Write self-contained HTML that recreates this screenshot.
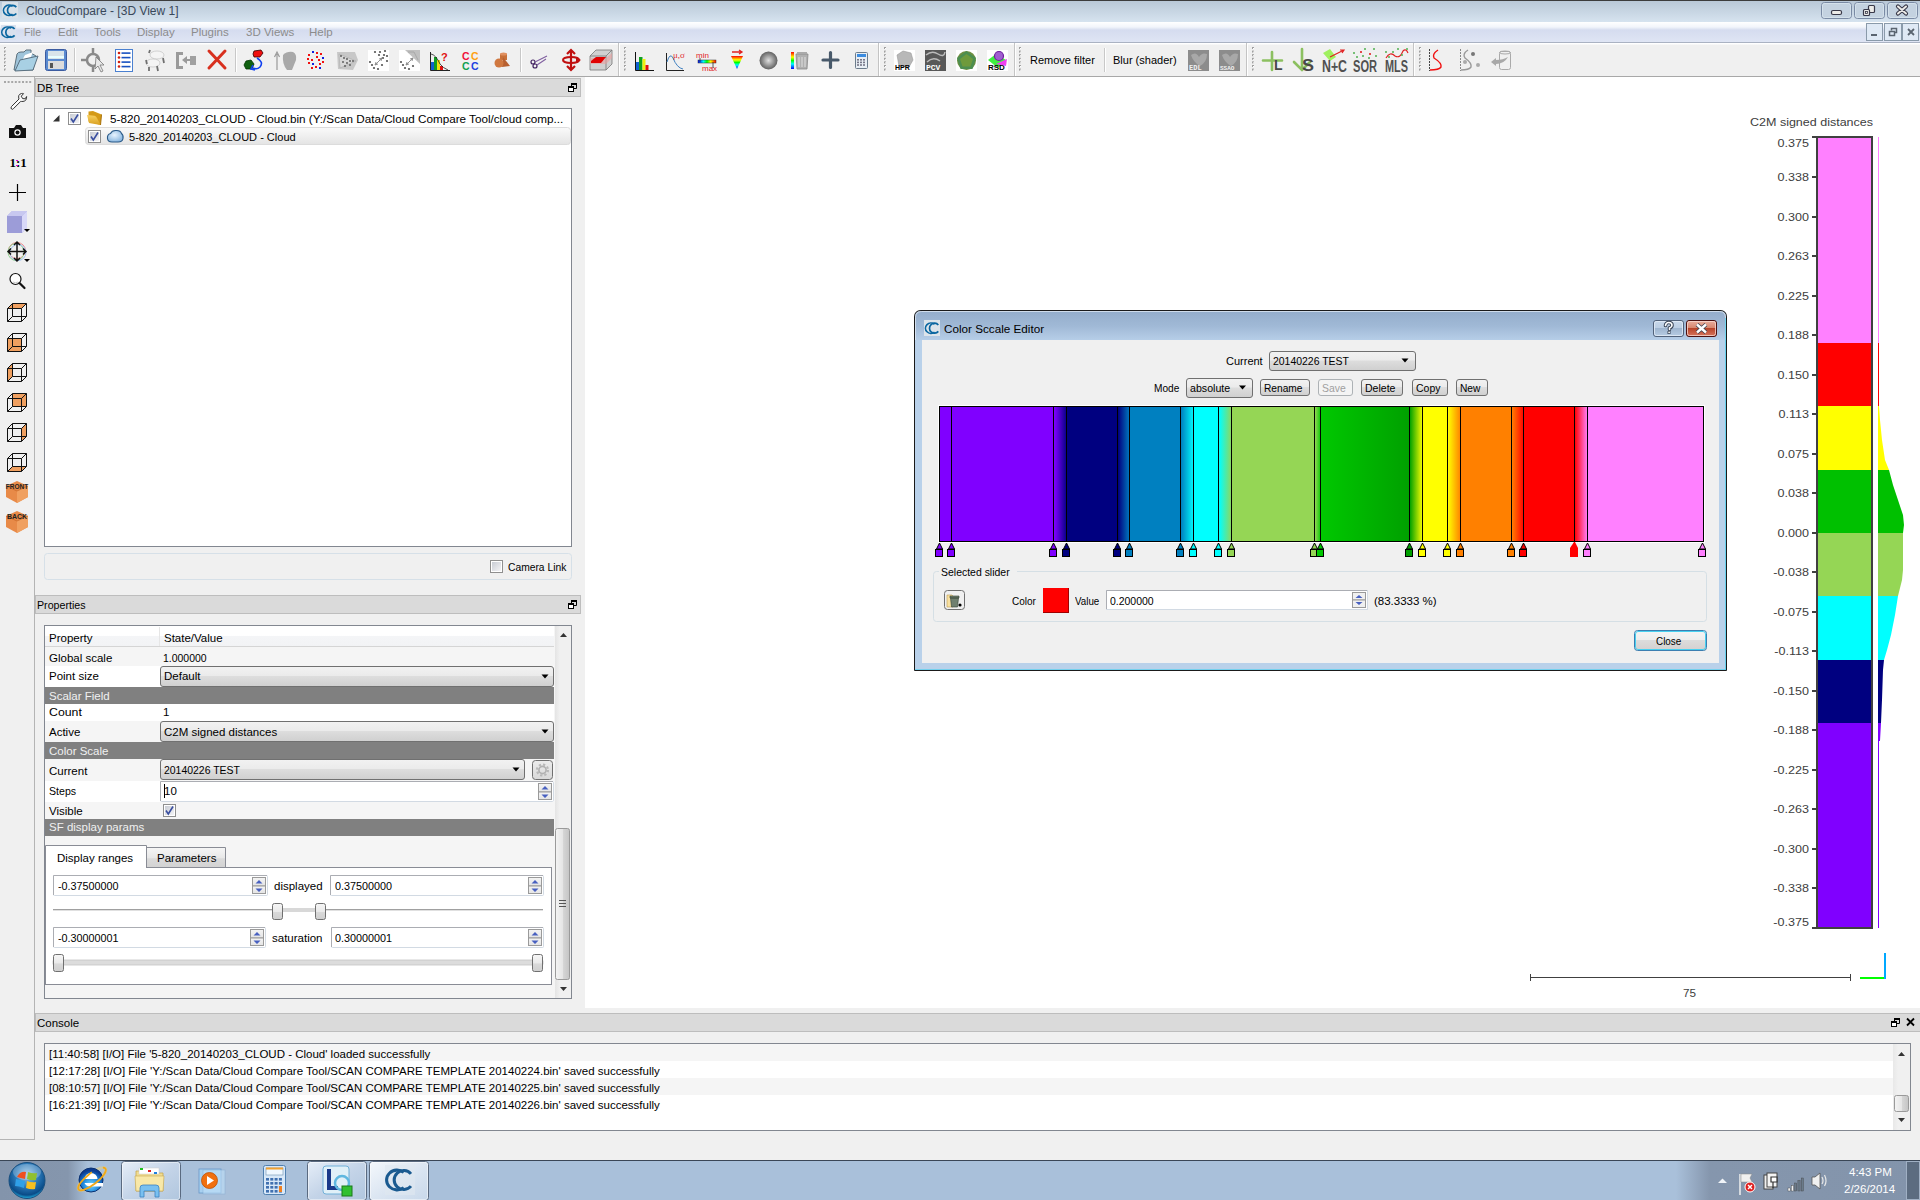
<!DOCTYPE html>
<html><head><meta charset="utf-8">
<style>
*{box-sizing:border-box;margin:0;padding:0}
html,body{width:1920px;height:1200px;overflow:hidden;background:#f0f0f0;font-family:"Liberation Sans",sans-serif;font-size:11.5px;color:#000;position:relative}
.a{position:absolute}
.t{position:absolute;white-space:nowrap;line-height:14px}
</style></head><body>

<!-- TITLE BAR -->
<div class="a" style="left:0;top:0;width:1920px;height:1px;background:#3c3c3c"></div>
<div class="a" style="left:0;top:1px;width:1920px;height:21px;background:linear-gradient(#b9c8d7,#d6e3ef)"></div>
<!-- MENU BAR -->
<div class="a" style="left:0;top:22px;width:1920px;height:20px;background:linear-gradient(#ffffff 0,#f2f5fb 25%,#d5dcef 40%,#dfe5f4 100%)"></div>
<div class="a" style="left:0;top:42px;width:1920px;height:1px;background:#aab2c2"></div>


<!-- TITLE/MENU CONTENT -->
<svg class="a" style="left:0;top:0" width="1920" height="77">
<defs>
<linearGradient id="wbtn" x1="0" y1="0" x2="0" y2="1"><stop offset="0" stop-color="#e3ebf3"/><stop offset="0.45" stop-color="#cfdbe8"/><stop offset="0.5" stop-color="#b7c8da"/><stop offset="1" stop-color="#d2e0ee"/></linearGradient>
<linearGradient id="mbtn" x1="0" y1="0" x2="0" y2="1"><stop offset="0" stop-color="#eef3fb"/><stop offset="1" stop-color="#d3ddef"/></linearGradient>
</defs>
<!-- title icon -->
<rect x="2" y="2" width="16" height="16" fill="#d9e1e8"/>
<g class="cc" fill="none" stroke="#0a66a0" stroke-width="1.70"><path d="M12.54 6.32 A5.50 5.20 0 1 0 12.54 14.28"/><path d="M16.33 7.09 A5.00 5.00 0 1 0 16.33 13.51"/></g>
<!-- menu icon -->
<rect x="1" y="25" width="15" height="15" fill="#d9e1ee"/>
<g class="cc" fill="none" stroke="#0a66a0" stroke-width="1.70"><path d="M10.84 28.22 A5.50 5.20 0 1 0 10.84 36.18"/><path d="M14.63 28.99 A5.00 5.00 0 1 0 14.63 35.41"/></g>
<!-- window buttons -->
<rect x="1821.5" y="2.5" width="30" height="16" rx="3" fill="#c4d2e0" stroke="#7a8aa4"/><rect x="1822.5" y="3.5" width="28" height="14" rx="2" fill="none" stroke="#d8e4ee" stroke-width="0.8"/>
<rect x="1854.5" y="2.5" width="30" height="16" rx="3" fill="#c4d2e0" stroke="#7a8aa4"/><rect x="1855.5" y="3.5" width="28" height="14" rx="2" fill="none" stroke="#d8e4ee" stroke-width="0.8"/>
<rect x="1887.5" y="2.5" width="30" height="16" rx="3" fill="#c4d2e0" stroke="#7a8aa4"/><rect x="1888.5" y="3.5" width="28" height="14" rx="2" fill="none" stroke="#d8e4ee" stroke-width="0.8"/>
<rect x="1831.5" y="10.5" width="10" height="4" rx="1.5" fill="#ecebe8" stroke="#383848" stroke-width="1.2"/>
<rect x="1868.5" y="5.5" width="6" height="7" rx="1" fill="#ecebe8" stroke="#383848" stroke-width="1.2"/><rect x="1863.5" y="9.5" width="6" height="6" rx="1" fill="#ecebe8" stroke="#383848" stroke-width="1.2"/><rect x="1865.5" y="11.5" width="2" height="2" fill="none" stroke="#383848" stroke-width="0.8"/>
<path d="M1898 6.5 L1906 13.5 M1906 6.5 L1898 13.5" stroke="#383848" stroke-width="4.2" stroke-linecap="round"/>
<path d="M1898 6.5 L1906 13.5 M1906 6.5 L1898 13.5" stroke="#ecebe8" stroke-width="2" stroke-linecap="round"/>
<!-- MDI buttons -->
<rect x="1866.5" y="23.5" width="16" height="17" fill="#dfe9f5" stroke="#8a9aaa"/>
<rect x="1884.5" y="23.5" width="17" height="17" fill="#dfe9f5" stroke="#8a9aaa"/>
<rect x="1902.5" y="23.5" width="16" height="17" fill="#dfe9f5" stroke="#8a9aaa"/>
<rect x="1871" y="34" width="6" height="2" fill="#5a6470"/>
<rect x="1889.5" y="31.5" width="5" height="4" fill="none" stroke="#5a6470" stroke-width="1.5"/>
<path d="M1891.5 30.5 v-2 h5 v4 h-2" fill="none" stroke="#5a6470" stroke-width="1.5"/>
<path d="M1908 29 l6 6 M1914 29 l-6 6" stroke="#5a6470" stroke-width="1.8"/>
</svg>
<div class="t" style="left:26px;top:4px;font-size:12px;color:#39485a">CloudCompare - [3D View 1]</div>
<div class="t" style="left:24px;top:25px;font-size:11.5px;color:#8c8c8c;word-spacing:0;transform:scaleX(0.92);transform-origin:0 0">File</div>
<div class="t" style="left:58px;top:25px;font-size:11.5px;color:#8c8c8c">Edit</div>
<div class="t" style="left:94px;top:25px;font-size:11.5px;color:#8c8c8c">Tools</div>
<div class="t" style="left:137px;top:25px;font-size:11.5px;color:#8c8c8c">Display</div>
<div class="t" style="left:191px;top:25px;font-size:11.5px;color:#8c8c8c">Plugins</div>
<div class="t" style="left:246px;top:25px;font-size:11.5px;color:#8c8c8c">3D Views</div>
<div class="t" style="left:309px;top:25px;font-size:11.5px;color:#8c8c8c">Help</div>

<!-- TOOLBAR -->
<div class="a" style="left:0;top:43px;width:1920px;height:33px;background:linear-gradient(#ffffff 0,#ffffff 1px,#f0f0f0 2px)"></div>
<div class="a" style="left:0;top:76px;width:1920px;height:1px;background:#a8a8a8"></div>

<!-- TOOLBAR ICONS -->
<svg class="a" style="left:0;top:0" width="1920" height="77"><rect x="4" y="47.0" width="2" height="2" fill="#a0a0a0"/><rect x="5" y="48.0" width="1" height="1" fill="#fff"/><rect x="4" y="50.6" width="2" height="2" fill="#a0a0a0"/><rect x="5" y="51.6" width="1" height="1" fill="#fff"/><rect x="4" y="54.2" width="2" height="2" fill="#a0a0a0"/><rect x="5" y="55.2" width="1" height="1" fill="#fff"/><rect x="4" y="57.8" width="2" height="2" fill="#a0a0a0"/><rect x="5" y="58.8" width="1" height="1" fill="#fff"/><rect x="4" y="61.4" width="2" height="2" fill="#a0a0a0"/><rect x="5" y="62.4" width="1" height="1" fill="#fff"/><rect x="4" y="65.0" width="2" height="2" fill="#a0a0a0"/><rect x="5" y="66.0" width="1" height="1" fill="#fff"/><rect x="4" y="68.6" width="2" height="2" fill="#a0a0a0"/><rect x="5" y="69.6" width="1" height="1" fill="#fff"/><path d="M14 70 L17 54 Q18 52 21 52 L24 52 L26 50 L31 50 L31 53 L36 56 L33 70 Z" fill="#9fc4da" stroke="#5c6f7a" stroke-width="1"/><path d="M18 68 L25 55 L33 52 L27 66 Z" fill="#fff"/><path d="M15 71 L20 60 L38 56 L33 70 Z" fill="#a8d0e4" stroke="#5a7080" stroke-width="1"/><rect x="45.5" y="49.5" width="21" height="21" rx="2" fill="#5a8ad0" stroke="#3c5ca0"/><rect x="48" y="51" width="16" height="8" fill="#d8e4ea"/><rect x="48" y="56" width="16" height="2" fill="#e8ffff"/><rect x="48" y="61" width="16" height="8" fill="#dcdcdc"/><rect x="50" y="63" width="3" height="5" fill="#555"/><rect x="74" y="48" width="1" height="24" fill="#c8c8c8"/><rect x="75" y="48" width="1" height="24" fill="#fff"/><circle cx="93" cy="60" r="6" fill="none" stroke="#8a8a8a" stroke-width="2.5"/><path d="M93 48 v7 M93 65 v7 M81 60 h7" stroke="#8a8a8a" stroke-width="2.5"/><path d="M96 57 L104 65 L100 65 L103 71 L101 72 L98 66 L95 69 Z" fill="#e8e8e8" stroke="#777" stroke-width="0.8"/><rect x="115.5" y="49.5" width="17" height="22" fill="#fff" stroke="#4a80d0"/><circle cx="119" cy="53.0" r="1.3" fill="#d02010"/><rect x="121.5" y="52.3" width="9" height="1.6" fill="#1850c0"/><circle cx="119" cy="57.5" r="1.3" fill="#d02010"/><rect x="121.5" y="56.8" width="9" height="1.6" fill="#1850c0"/><circle cx="119" cy="62.0" r="1.3" fill="#d02010"/><rect x="121.5" y="61.3" width="9" height="1.6" fill="#1850c0"/><circle cx="119" cy="66.5" r="1.3" fill="#d02010"/><rect x="121.5" y="65.8" width="9" height="1.6" fill="#1850c0"/><ellipse cx="157" cy="55" rx="7" ry="4" fill="#f4f4f4" stroke="#bbb" stroke-width="0.6"/><ellipse cx="153" cy="63" rx="7" ry="4" fill="#f4f4f4" stroke="#bbb" stroke-width="0.6"/><path d="M150 50 l-1 3 M163 58 l1 5 M146 60 l1 4 M149 67 l0 4 M157 66 l1 5" stroke="#707070" stroke-width="1.8"/><path d="M176 52 h7 v3 h-4 v11 h4 v3 h-7 Z" fill="#9a9a9a"/><path d="M182 60 l5 -4 v3 h4 v2 h-4 v3 Z" fill="#9a9a9a"/><rect x="190" y="56" width="6" height="9" fill="#a0a0a0"/><path d="M209 51 L225 68 M225 51 L209 68" stroke="#d8301e" stroke-width="3" stroke-linecap="round"/><rect x="235" y="48" width="1" height="24" fill="#c8c8c8"/><rect x="236" y="48" width="1" height="24" fill="#fff"/><path d="M254 51 L261 50 L263 53 L260 57 L254 57 L253 54 Z" fill="#f01010" stroke="#300" stroke-width="0.8"/><path d="M246 61 L251 60 L254 64 L252 69 L246 69 L244 65 Z" fill="#106010" stroke="#030" stroke-width="0.8"/><path d="M257 58 Q264 62 260 67 Q257 70 253 68" fill="none" stroke="#1040f0" stroke-width="1.6"/><path d="M253 65 l-2 4 l4 1" fill="none" stroke="#1040f0" stroke-width="1.6"/><path d="M277 70 V54 M274.5 57 L277 52 L279.5 57" stroke="#999" stroke-width="1.2" fill="none"/><path d="M283 55 Q287 51 293 52 Q297 54 296 60 L292 70 L287 70 Q282 64 283 55 Z" fill="#a8a8a8"/><rect x="312" y="51" width="2" height="2" fill="#1020e0"/><rect x="316" y="52" width="2" height="2" fill="#f01010"/><rect x="320" y="53" width="2" height="2" fill="#f01010"/><rect x="308" y="54" width="2" height="2" fill="#f01010"/><rect x="316" y="56" width="2" height="2" fill="#f01010"/><rect x="322" y="57" width="2" height="2" fill="#1020e0"/><rect x="307" y="58" width="2" height="2" fill="#f01010"/><rect x="311" y="59" width="2" height="2" fill="#f01010"/><rect x="318" y="59" width="2" height="2" fill="#f01010"/><rect x="322" y="61" width="2" height="2" fill="#f01010"/><rect x="308" y="62" width="2" height="2" fill="#f01010"/><rect x="312" y="63" width="2" height="2" fill="#1020e0"/><rect x="319" y="63" width="2" height="2" fill="#f01010"/><rect x="311" y="67" width="2" height="2" fill="#f01010"/><rect x="315" y="66" width="2" height="2" fill="#f01010"/><rect x="319" y="67" width="2" height="2" fill="#1020e0"/><path d="M337 52 L355 52 L358 60 L353 70 L338 69 Z" fill="#c8c8c8"/><path d="M339 54 L356 61 L340 68 Z" fill="#d8d8d8" stroke="#aaa" stroke-width="0.6"/><circle cx="341" cy="56" r="0.9" fill="#555"/><circle cx="344" cy="58" r="0.9" fill="#555"/><circle cx="347" cy="59" r="0.9" fill="#555"/><circle cx="343" cy="62" r="0.9" fill="#555"/><circle cx="347" cy="63" r="0.9" fill="#555"/><circle cx="350" cy="61" r="0.9" fill="#555"/><circle cx="345" cy="66" r="0.9" fill="#555"/><circle cx="350" cy="65" r="0.9" fill="#555"/><circle cx="353" cy="61" r="0.9" fill="#555"/><rect x="368" y="50" width="21" height="21" fill="#fff"/><circle cx="375" cy="52" r="1.1" fill="#555"/><circle cx="380" cy="52" r="1.1" fill="#555"/><circle cx="385" cy="51" r="1.1" fill="#555"/><circle cx="379" cy="55" r="1.1" fill="#555"/><circle cx="384" cy="55" r="1.1" fill="#555"/><circle cx="387" cy="56" r="1.1" fill="#555"/><circle cx="383" cy="58" r="1.1" fill="#555"/><circle cx="387" cy="61" r="1.1" fill="#555"/><circle cx="370" cy="62" r="1.1" fill="#555"/><circle cx="372" cy="65" r="1.1" fill="#555"/><circle cx="374" cy="68" r="1.1" fill="#555"/><circle cx="378" cy="69" r="1.1" fill="#555"/><circle cx="382" cy="65" r="1.1" fill="#555"/><path d="M375 65 L382 58 M375 65 l1 -3 M375 65 l3 -1 M382 58 l-3 1 M382 58 l-1 3" stroke="#888" stroke-width="0.9"/><rect x="399" y="50" width="21" height="21" fill="#fff"/><path d="M405 50 L420 50 L420 64 Z" fill="#c0c0c0"/><path d="M408 52 L414 52 L418 60" stroke="#999" fill="none" stroke-width="0.6"/><circle cx="401" cy="62" r="1.1" fill="#555"/><circle cx="403" cy="65" r="1.1" fill="#555"/><circle cx="405" cy="68" r="1.1" fill="#555"/><circle cx="409" cy="69" r="1.1" fill="#555"/><circle cx="413" cy="66" r="1.1" fill="#555"/><path d="M406 65 L413 58 M406 65 l1 -3 M406 65 l3 -1 M413 58 l-3 1 M413 58 l-1 3" stroke="#888" stroke-width="0.9"/><path d="M430.5 52 V70.5 H450" fill="none" stroke="#222" stroke-width="1"/><rect x="431" y="62" width="3" height="8" fill="#1060d0"/><rect x="434" y="57" width="3" height="13" fill="#10a020"/><rect x="437" y="60" width="3" height="10" fill="#f0e010"/><rect x="440" y="66" width="3" height="4" fill="#e01010"/><path d="M431 54 Q436 55 440 64 Q443 68 448 70" stroke="#222" fill="none" stroke-width="0.8"/><text x="441" y="61" font-family="Liberation Sans" font-weight="bold" font-size="11" fill="#e01010">?</text><g font-family="Liberation Sans" font-weight="bold" font-size="10.5"><text x="462" y="60" fill="#f0103a">C</text><text x="471" y="60" fill="#ffa010">C</text><text x="462" y="70" fill="#10a050">C</text><text x="471" y="70" fill="#2040e0">C</text></g><path d="M500 54 h7 v6 h-7 Z" fill="#c87038"/><ellipse cx="503.5" cy="54" rx="3.5" ry="1.5" fill="#e09060"/><path d="M503 57 L510 66 L502 67 Z" fill="#b86030"/><circle cx="499" cy="63" r="4.5" fill="#d07840"/><rect x="520" y="48" width="1" height="24" fill="#c8c8c8"/><rect x="521" y="48" width="1" height="24" fill="#fff"/><circle cx="533" cy="62" r="2" fill="none" stroke="#402060" stroke-width="1.2"/><circle cx="535" cy="66" r="2" fill="none" stroke="#402060" stroke-width="1.2"/><path d="M535 62 L547 56 M537 65 L546 59" stroke="#8060a0" stroke-width="1.1"/><path d="M571 50 V70 M567 54 L571 50 L575 54 M567 66 L571 70 L575 66" fill="none" stroke="#c01010" stroke-width="2.2"/><ellipse cx="571" cy="60" rx="8" ry="3" fill="none" stroke="#c01010" stroke-width="2"/><path d="M576 57 L581 60 L576 63 Z" fill="#c01010"/><path d="M590 56 L596 50 L612 50 L612 64 L606 70 L590 70 Z" fill="#d0d0d0" stroke="#777" stroke-width="0.8"/><path d="M590 56 L606 56 L612 50 M606 56 V70" fill="none" stroke="#777" stroke-width="0.8"/><path d="M590 58 L606 58 L612 53 L612 58 L606 64 L590 64 Z" fill="#e8a0a0" opacity="0.6"/><path d="M591 61 L596 57 L606 57 L601 63 L591 63 Z" fill="#e00000"/><rect x="618" y="43" width="1" height="33" fill="#c4c4c4"/><rect x="619" y="43" width="1" height="33" fill="#fff"/><rect x="624" y="47.0" width="2" height="2" fill="#a0a0a0"/><rect x="625" y="48.0" width="1" height="1" fill="#fff"/><rect x="624" y="50.6" width="2" height="2" fill="#a0a0a0"/><rect x="625" y="51.6" width="1" height="1" fill="#fff"/><rect x="624" y="54.2" width="2" height="2" fill="#a0a0a0"/><rect x="625" y="55.2" width="1" height="1" fill="#fff"/><rect x="624" y="57.8" width="2" height="2" fill="#a0a0a0"/><rect x="625" y="58.8" width="1" height="1" fill="#fff"/><rect x="624" y="61.4" width="2" height="2" fill="#a0a0a0"/><rect x="625" y="62.4" width="1" height="1" fill="#fff"/><rect x="624" y="65.0" width="2" height="2" fill="#a0a0a0"/><rect x="625" y="66.0" width="1" height="1" fill="#fff"/><rect x="624" y="68.6" width="2" height="2" fill="#a0a0a0"/><rect x="625" y="69.6" width="1" height="1" fill="#fff"/><path d="M635.5 52 V70.5 H654" fill="none" stroke="#111" stroke-width="1"/><rect x="636" y="62" width="3" height="8" fill="#1060d0"/><rect x="639" y="57" width="3.5" height="13" fill="#10a020"/><rect x="642.5" y="59" width="3" height="11" fill="#f0f010"/><rect x="645.5" y="65" width="3" height="5" fill="#e01010"/><path d="M666.5 53 V70.5 H684" fill="none" stroke="#222" stroke-width="1"/><path d="M667 62 Q670 52 673 58 Q677 68 683 69" fill="none" stroke="#4080c0" stroke-width="1"/><text x="673" y="58" font-family="Liberation Serif" font-size="9" fill="#e03030">μ,σ</text><text x="696" y="58" font-family="Liberation Sans" font-size="8" fill="#e02020">min</text><text x="702" y="71" font-family="Liberation Sans" font-size="8" fill="#e02020">max</text><defs><linearGradient id="rb" x1="0" x2="1"><stop offset="0" stop-color="#00f"/><stop offset=".3" stop-color="#0ff"/><stop offset=".5" stop-color="#0f0"/><stop offset=".7" stop-color="#ff0"/><stop offset="1" stop-color="#f00"/></linearGradient><linearGradient id="rbv" x1="0" y1="1" x2="0" y2="0"><stop offset="0" stop-color="#00f"/><stop offset=".3" stop-color="#0ff"/><stop offset=".5" stop-color="#0f0"/><stop offset=".7" stop-color="#ff0"/><stop offset="1" stop-color="#f00"/></linearGradient></defs><rect x="698" y="60" width="18" height="3" fill="url(#rb)" stroke="#333" stroke-width="0.5"/><path d="M700 58 v4 M713 62 v6" stroke="#333" stroke-width="0.8"/><path d="M731 56 L743 56 L737 69 Z" fill="url(#rbv)"/><path d="M732 52 h9 M739 50 l3 2 l-3 2" stroke="#e02020" stroke-width="1.3" fill="none"/><defs><radialGradient id="sph" cx=".5" cy=".5" r=".5"><stop offset="0" stop-color="#e0e0e0"/><stop offset="1" stop-color="#606060"/></radialGradient></defs><circle cx="768.5" cy="60.5" r="9" fill="url(#sph)"/><rect x="791" y="52" width="3" height="17" fill="url(#rbv)"/><path d="M796 54 h12 l-1 15 h-10 Z" fill="#b0b0b0" stroke="#888" stroke-width="0.8"/><rect x="797" y="52" width="10" height="2" fill="#aaa"/><path d="M799 57 v10 M802 57 v10 M805 57 v10" stroke="#e0e0e0" stroke-width="1"/><path d="M823 60 H838 M830.5 52.5 V67.5" stroke="#48596a" stroke-width="3.2" stroke-linecap="round"/><rect x="855.5" y="52.5" width="12" height="16" rx="1" fill="#e8eef4" stroke="#6c7c8c"/><rect x="857" y="54" width="9" height="3" fill="#3c8ce0"/><rect x="857" y="59.0" width="2" height="1.6" fill="#778"/><rect x="860" y="59.0" width="2" height="1.6" fill="#778"/><rect x="863" y="59.0" width="2" height="1.6" fill="#778"/><rect x="857" y="61.6" width="2" height="1.6" fill="#778"/><rect x="860" y="61.6" width="2" height="1.6" fill="#778"/><rect x="863" y="61.6" width="2" height="1.6" fill="#778"/><rect x="857" y="64.2" width="2" height="1.6" fill="#778"/><rect x="860" y="64.2" width="2" height="1.6" fill="#778"/><rect x="863" y="64.2" width="2" height="1.6" fill="#778"/><rect x="878" y="43" width="1" height="33" fill="#c4c4c4"/><rect x="879" y="43" width="1" height="33" fill="#fff"/><rect x="884" y="47.0" width="2" height="2" fill="#a0a0a0"/><rect x="885" y="48.0" width="1" height="1" fill="#fff"/><rect x="884" y="50.6" width="2" height="2" fill="#a0a0a0"/><rect x="885" y="51.6" width="1" height="1" fill="#fff"/><rect x="884" y="54.2" width="2" height="2" fill="#a0a0a0"/><rect x="885" y="55.2" width="1" height="1" fill="#fff"/><rect x="884" y="57.8" width="2" height="2" fill="#a0a0a0"/><rect x="885" y="58.8" width="1" height="1" fill="#fff"/><rect x="884" y="61.4" width="2" height="2" fill="#a0a0a0"/><rect x="885" y="62.4" width="1" height="1" fill="#fff"/><rect x="884" y="65.0" width="2" height="2" fill="#a0a0a0"/><rect x="885" y="66.0" width="1" height="1" fill="#fff"/><rect x="884" y="68.6" width="2" height="2" fill="#a0a0a0"/><rect x="885" y="69.6" width="1" height="1" fill="#fff"/><rect x="894" y="50" width="21" height="21" fill="#fff"/><path d="M897 55 L903 51 L911 53 L913 60 L909 67 L899 66 Z" fill="#b8b8b8" stroke="#999" stroke-width="0.6"/><text x="895" y="70" font-family="Liberation Sans" font-weight="bold" font-size="7" fill="#000">HPR</text><rect x="925" y="50" width="21" height="21" fill="#585858"/><path d="M926 55 Q932 50 938 54 Q944 58 945 52 M927 62 Q933 56 940 61" stroke="#bbb" fill="none" stroke-width="1.5"/><text x="926" y="70" font-family="Liberation Mono" font-weight="bold" font-size="8" fill="#fff">PCV</text><rect x="956" y="50" width="21" height="21" fill="#fff"/><circle cx="966.5" cy="60.5" r="9.5" fill="#6f8f40"/><path d="M966.5 51 L976 58 L972.5 69 L960.5 69 L957 58 Z" fill="#4c8e50"/><path d="M966.5 54 L973 59 L970.5 66.5 L962.5 66.5 L960 59 Z" fill="#6e9a3c"/><rect x="987" y="50" width="21" height="21" fill="#fff"/><path d="M988 60 L996 54 L1006 60 L998 68 Z" fill="#40f040"/><path d="M996 64 L1007 59 L1006 66 Z" fill="#f040f0"/><circle cx="999" cy="56" r="4.5" fill="#a060d0" stroke="#7020a0" stroke-width="1.2"/><text x="988" y="70" font-family="Liberation Sans" font-weight="bold" font-size="8" fill="#000">RSD</text><rect x="1014" y="43" width="1" height="33" fill="#c4c4c4"/><rect x="1015" y="43" width="1" height="33" fill="#fff"/><rect x="1019" y="47.0" width="2" height="2" fill="#a0a0a0"/><rect x="1020" y="48.0" width="1" height="1" fill="#fff"/><rect x="1019" y="50.6" width="2" height="2" fill="#a0a0a0"/><rect x="1020" y="51.6" width="1" height="1" fill="#fff"/><rect x="1019" y="54.2" width="2" height="2" fill="#a0a0a0"/><rect x="1020" y="55.2" width="1" height="1" fill="#fff"/><rect x="1019" y="57.8" width="2" height="2" fill="#a0a0a0"/><rect x="1020" y="58.8" width="1" height="1" fill="#fff"/><rect x="1019" y="61.4" width="2" height="2" fill="#a0a0a0"/><rect x="1020" y="62.4" width="1" height="1" fill="#fff"/><rect x="1019" y="65.0" width="2" height="2" fill="#a0a0a0"/><rect x="1020" y="66.0" width="1" height="1" fill="#fff"/><rect x="1019" y="68.6" width="2" height="2" fill="#a0a0a0"/><rect x="1020" y="69.6" width="1" height="1" fill="#fff"/><rect x="1104" y="48" width="1" height="24" fill="#c8c8c8"/><rect x="1105" y="48" width="1" height="24" fill="#fff"/><rect x="1188" y="50" width="21" height="21" fill="#8c8c8c"/><path d="M1191 55 Q1196 51 1199 57 Q1202 52 1207 54 Q1207 62 1200 66 Q1193 62 1191 55 Z" fill="#a8a8a8"/><text x="1189" y="70" font-family="Liberation Mono" font-weight="bold" font-size="7" fill="#f0f0f0">EDL</text><rect x="1219" y="50" width="21" height="21" fill="#8c8c8c"/><path d="M1222 55 Q1227 51 1230 57 Q1233 52 1238 54 Q1238 62 1231 66 Q1224 62 1222 55 Z" fill="#a8a8a8"/><text x="1220" y="70" font-family="Liberation Mono" font-weight="bold" font-size="6" fill="#f0f0f0">SSAO</text><rect x="1246" y="43" width="1" height="33" fill="#c4c4c4"/><rect x="1247" y="43" width="1" height="33" fill="#fff"/><rect x="1252" y="47.0" width="2" height="2" fill="#a0a0a0"/><rect x="1253" y="48.0" width="1" height="1" fill="#fff"/><rect x="1252" y="50.6" width="2" height="2" fill="#a0a0a0"/><rect x="1253" y="51.6" width="1" height="1" fill="#fff"/><rect x="1252" y="54.2" width="2" height="2" fill="#a0a0a0"/><rect x="1253" y="55.2" width="1" height="1" fill="#fff"/><rect x="1252" y="57.8" width="2" height="2" fill="#a0a0a0"/><rect x="1253" y="58.8" width="1" height="1" fill="#fff"/><rect x="1252" y="61.4" width="2" height="2" fill="#a0a0a0"/><rect x="1253" y="62.4" width="1" height="1" fill="#fff"/><rect x="1252" y="65.0" width="2" height="2" fill="#a0a0a0"/><rect x="1253" y="66.0" width="1" height="1" fill="#fff"/><rect x="1252" y="68.6" width="2" height="2" fill="#a0a0a0"/><rect x="1253" y="69.6" width="1" height="1" fill="#fff"/><path d="M1263 60.5 H1282 M1272 52 V70" stroke="#8cc060" stroke-width="2.6" stroke-linecap="round"/><text x="1274" y="69.5" font-family="Liberation Sans" font-weight="bold" font-size="14" fill="#484848">L</text><path d="M1302 49 V70 M1294 62 L1302 70 L1310 62" stroke="#8cc060" stroke-width="2.6" stroke-linecap="round" fill="none"/><text x="1302" y="70.5" font-family="Liberation Sans" font-weight="bold" font-size="16" fill="#484848" textLength="12" lengthAdjust="spacingAndGlyphs">S</text><path d="M1323 53 L1330 49 L1336 57 L1330 61 Z" fill="#a0f060"/><path d="M1330 57 L1344 50 M1340 50 l4 0 l-2 3" stroke="#e02020" stroke-width="1.2" fill="none"/><text x="1322" y="71.5" font-family="Liberation Sans Narrow,Liberation Sans" font-weight="bold" font-size="16" fill="#505050" textLength="25" lengthAdjust="spacingAndGlyphs">N+C</text><text x="1353" y="71.5" font-family="Liberation Sans" font-weight="bold" font-size="16" fill="#505050" textLength="24" lengthAdjust="spacingAndGlyphs">SOR</text><circle cx="1354" cy="53" r="1" fill="#50b050"/><circle cx="1365" cy="49" r="1" fill="#50b050"/><circle cx="1374" cy="49" r="1" fill="#50b050"/><circle cx="1376" cy="56" r="1" fill="#50b050"/><circle cx="1357" cy="57" r="1" fill="#50b050"/><circle cx="1363" cy="56" r="1" fill="#50b050"/><circle cx="1369" cy="58" r="1" fill="#50b050"/><path d="M1360 51 l2 2 m0 -2 l-2 2 M1369 53 l2 2 m0 -2 l-2 2" stroke="#e02020" stroke-width="0.8"/><text x="1385" y="71.5" font-family="Liberation Sans" font-weight="bold" font-size="16" fill="#505050" textLength="23" lengthAdjust="spacingAndGlyphs">MLS</text><path d="M1386 58 Q1390 51 1395 56 Q1400 59 1403 51 Q1406 48 1408 53" stroke="#e02020" stroke-width="1.1" fill="none"/><circle cx="1386" cy="52" r="1" fill="#50b050"/><circle cx="1393" cy="52" r="1" fill="#50b050"/><circle cx="1398" cy="49" r="1" fill="#50b050"/><circle cx="1402" cy="55" r="1" fill="#50b050"/><circle cx="1407" cy="49" r="1" fill="#50b050"/><circle cx="1389" cy="57" r="1" fill="#50b050"/><rect x="1413" y="43" width="1" height="33" fill="#c4c4c4"/><rect x="1414" y="43" width="1" height="33" fill="#fff"/><rect x="1419" y="47.0" width="2" height="2" fill="#a0a0a0"/><rect x="1420" y="48.0" width="1" height="1" fill="#fff"/><rect x="1419" y="50.6" width="2" height="2" fill="#a0a0a0"/><rect x="1420" y="51.6" width="1" height="1" fill="#fff"/><rect x="1419" y="54.2" width="2" height="2" fill="#a0a0a0"/><rect x="1420" y="55.2" width="1" height="1" fill="#fff"/><rect x="1419" y="57.8" width="2" height="2" fill="#a0a0a0"/><rect x="1420" y="58.8" width="1" height="1" fill="#fff"/><rect x="1419" y="61.4" width="2" height="2" fill="#a0a0a0"/><rect x="1420" y="62.4" width="1" height="1" fill="#fff"/><rect x="1419" y="65.0" width="2" height="2" fill="#a0a0a0"/><rect x="1420" y="66.0" width="1" height="1" fill="#fff"/><rect x="1419" y="68.6" width="2" height="2" fill="#a0a0a0"/><rect x="1420" y="69.6" width="1" height="1" fill="#fff"/><path d="M1429.5 49 V71" stroke="#444" stroke-width="1" stroke-dasharray="2,1"/><path d="M1438 50 Q1432 54 1434 58 Q1442 63 1441 67 Q1439 70 1430 70" fill="none" stroke="#f01010" stroke-width="1.4"/><path d="M1460.5 49 V71" stroke="#888" stroke-width="1" stroke-dasharray="2,1"/><path d="M1468 50 Q1462 54 1465 58 Q1472 63 1471 67 Q1469 70 1461 70" fill="none" stroke="#999" stroke-width="1.4"/><circle cx="1473" cy="54" r="2" fill="#777"/><circle cx="1465" cy="62" r="2" fill="#aaa"/><circle cx="1478" cy="65" r="2" fill="#aaa"/><rect x="1499.5" y="51.5" width="11" height="18" rx="2" fill="none" stroke="#aaa" stroke-width="1"/><ellipse cx="1505" cy="52.5" rx="5.5" ry="1.5" fill="none" stroke="#aaa"/><path d="M1491 62 L1496 58 L1496 60 Q1503 60 1508 57 Q1504 64 1496 64 L1496 66 Z" fill="#a8a8a8"/></svg>
<div class="t" style="left:1030px;top:53px;font-size:11px">Remove filter</div>
<div class="t" style="left:1113px;top:53px;font-size:11px">Blur (shader)</div>

<!-- LEFT TOOLBAR -->
<div class="a" style="left:34px;top:77px;width:1px;height:1063px;background:#b4b4b4"></div>
<div class="a" style="left:0;top:1139px;width:35px;height:1px;background:#b4b4b4"></div>

<svg class="a" style="left:0;top:0" width="35" height="560"><rect x="4.0" y="81" width="2" height="2" fill="#a8a8a8"/><rect x="7.6" y="81" width="2" height="2" fill="#a8a8a8"/><rect x="11.2" y="81" width="2" height="2" fill="#a8a8a8"/><rect x="14.8" y="81" width="2" height="2" fill="#a8a8a8"/><rect x="18.4" y="81" width="2" height="2" fill="#a8a8a8"/><rect x="22.0" y="81" width="2" height="2" fill="#a8a8a8"/><rect x="25.6" y="81" width="2" height="2" fill="#a8a8a8"/><rect x="29.2" y="81" width="2" height="2" fill="#a8a8a8"/><path d="M11.5 106.5 L19 99 Q17.5 94.5 21.5 93.5 Q22.5 93.3 23.5 93.6 L21.3 96.2 L22.6 98.6 L25.2 98.8 L26.6 96.5 Q27 101.5 22 101.5 Q21.5 101.5 20.8 101.3 L13.3 108.8 Q12.3 109.8 11.5 109 Q10.5 108 11.5 106.5 Z" fill="#fafafa" stroke="#333" stroke-width="1" stroke-linejoin="round"/><path d="M9 128 h5 l2 -3 h5 l2 3 h3 v10 h-17 Z" fill="#111"/><circle cx="17.5" cy="132.5" r="3.2" fill="#fff"/><circle cx="17.5" cy="132.5" r="2" fill="#111"/><rect x="10" y="127" width="3" height="1" fill="#fff"/><text x="9.5" y="167" font-family="Liberation Serif" font-weight="bold" font-size="13" fill="#000">1:1</text><rect x="16" y="160" width="2" height="1" fill="#e000e0"/><rect x="16" y="165" width="2" height="1" fill="#e000e0"/><path d="M17.5 184 V201 M9 192.5 H26" stroke="#000" stroke-width="1.2"/><path d="M7 216 L12 211 L27 211 L27 228 L22 233 L7 233 Z" fill="#b4b4e8"/><path d="M7 216 L22 216 L22 233 L7 233 Z" fill="#9c9cd8"/><path d="M22 216 L27 211 L27 228 L22 233 Z" fill="#d8d8f8"/><path d="M7 216 L12 211 L27 211 L22 216 Z" fill="#c8c8f0"/><path d="M24 229 h6 l-3 3 Z" fill="#000"/><ellipse cx="17" cy="250.5" rx="8.5" ry="8" fill="none" stroke="#f09090" stroke-width="1"/><ellipse cx="16" cy="252" rx="8" ry="8.5" fill="none" stroke="#90d090" stroke-width="1"/><ellipse cx="18" cy="252.5" rx="8" ry="8" fill="none" stroke="#a0c0f0" stroke-width="1"/><path d="M17 242 V261 M8 251.5 H26 M14 245 L17 242 L20 245 M14 258 L17 261 L20 258 M11 248.5 L8 251.5 L11 254.5 M23 248.5 L26 251.5 L23 254.5" fill="none" stroke="#111" stroke-width="1.5"/><path d="M24 259 h6 l-3 3 Z" fill="#000"/><circle cx="15.5" cy="279" r="5.5" fill="#fff" stroke="#111" stroke-width="1.2"/><path d="M13 282 Q15.5 283.5 18 282" stroke="#bbb" fill="none" stroke-width="0.8"/><path d="M19.5 283 L24.5 288" stroke="#111" stroke-width="2.2" stroke-linecap="round"/><path d="M7.5 308.5 L12.5 303.5 L26.5 303.5 L21.5 308.5 Z" fill="#f0a060"/><path d="M7.5 308.5 H21.5 V321.5 H7.5 Z M12.5 303.5 H26.5 V316.5 H12.5 Z M7.5 308.5 L12.5 303.5 M21.5 308.5 L26.5 303.5 M21.5 321.5 L26.5 316.5 M7.5 321.5 L12.5 316.5" fill="none" stroke="#111" stroke-width="1"/><path d="M7.5 338.5 H21.5 V351.5 H7.5 Z" fill="#f0a060"/><path d="M7.5 338.5 H21.5 V351.5 H7.5 Z M12.5 333.5 H26.5 V346.5 H12.5 Z M7.5 338.5 L12.5 333.5 M21.5 338.5 L26.5 333.5 M21.5 351.5 L26.5 346.5 M7.5 351.5 L12.5 346.5" fill="none" stroke="#111" stroke-width="1"/><path d="M7.5 368.5 L12.5 363.5 V376.5 L7.5 381.5 Z" fill="#f0a060"/><path d="M7.5 368.5 H21.5 V381.5 H7.5 Z M12.5 363.5 H26.5 V376.5 H12.5 Z M7.5 368.5 L12.5 363.5 M21.5 368.5 L26.5 363.5 M21.5 381.5 L26.5 376.5 M7.5 381.5 L12.5 376.5" fill="none" stroke="#111" stroke-width="1"/><path d="M12.5 393.5 H26.5 V406.5 H12.5 Z" fill="#f0a060"/><path d="M7.5 398.5 H21.5 V411.5 H7.5 Z M12.5 393.5 H26.5 V406.5 H12.5 Z M7.5 398.5 L12.5 393.5 M21.5 398.5 L26.5 393.5 M21.5 411.5 L26.5 406.5 M7.5 411.5 L12.5 406.5" fill="none" stroke="#111" stroke-width="1"/><path d="M21.5 428.5 L26.5 423.5 V436.5 L21.5 441.5 Z" fill="#f0a060"/><path d="M7.5 428.5 H21.5 V441.5 H7.5 Z M12.5 423.5 H26.5 V436.5 H12.5 Z M7.5 428.5 L12.5 423.5 M21.5 428.5 L26.5 423.5 M21.5 441.5 L26.5 436.5 M7.5 441.5 L12.5 436.5" fill="none" stroke="#111" stroke-width="1"/><path d="M7.5 471.5 L12.5 466.5 H26.5 L21.5 471.5 Z" fill="#f0a060"/><path d="M7.5 458.5 H21.5 V471.5 H7.5 Z M12.5 453.5 H26.5 V466.5 H12.5 Z M7.5 458.5 L12.5 453.5 M21.5 458.5 L26.5 453.5 M21.5 471.5 L26.5 466.5 M7.5 471.5 L12.5 466.5" fill="none" stroke="#111" stroke-width="1"/><path d="M17 481 L28 486 V497 L17 503 L6 497 V486 Z" fill="#e88a48"/><path d="M17 491 L28 486 V497 L17 503 Z" fill="#f0a060"/><path d="M6 486 L17 491 L28 486" stroke="#c06020" fill="none" stroke-width="0.6"/><text x="17" y="489" text-anchor="middle" font-family="Liberation Sans" font-weight="bold" font-size="6.5" fill="#222">FRONT</text><path d="M17 511 L28 516 V527 L17 533 L6 527 V516 Z" fill="#e88a48"/><path d="M17 521 L28 516 V527 L17 533 Z" fill="#f0a060"/><path d="M6 516 L17 521 L28 516" stroke="#c06020" fill="none" stroke-width="0.6"/><text x="17" y="519" text-anchor="middle" font-family="Liberation Sans" font-weight="bold" font-size="7" fill="#222">BACK</text></svg>

<!-- 3D VIEW -->
<div class="a" style="left:585px;top:77px;width:1335px;height:931px;background:#fff"></div>

<!-- DB TREE DOCK -->
<div class="a" style="left:35px;top:78px;width:546px;height:19px;background:#dadada;border:1px solid #bdbdbd"></div>
<div class="t" style="left:37px;top:81px">DB Tree</div>
<div class="a" style="left:44px;top:108px;width:528px;height:439px;background:#fff;border:1px solid #828790"></div>


<svg class="a" style="left:0;top:0" width="600" height="620"><defs><linearGradient id="cbg" x1="0" y1="0" x2="1" y2="1"><stop offset="0" stop-color="#c8ccd4"/><stop offset="1" stop-color="#f4f4f6"/></linearGradient><linearGradient id="selg" x1="0" y1="0" x2="0" y2="1"><stop offset="0" stop-color="#fafafa"/><stop offset="1" stop-color="#e4e4e4"/></linearGradient><linearGradient id="fold" x1="0" y1="0" x2="0" y2="1"><stop offset="0" stop-color="#f8d060"/><stop offset="1" stop-color="#d8a020"/></linearGradient><radialGradient id="cloudg" cx=".45" cy=".4" r=".6"><stop offset="0" stop-color="#e8f4ff"/><stop offset="1" stop-color="#8cb8e0"/></radialGradient></defs><path d="M571.5 86 V83.5 H576.5 V88.5 H574" fill="none" stroke="#000" stroke-width="1"/><rect x="571" y="83" width="6" height="2" fill="#000"/><rect x="568.5" y="86.5" width="5" height="5" fill="#fff" stroke="#000" stroke-width="1"/><rect x="568" y="86" width="6" height="2" fill="#000"/><path d="M59.5 115 V121.5 H53 Z" fill="#333"/><rect x="68.5" y="112.5" width="12" height="12" fill="#fff" stroke="#8f8f8f"/><rect x="70" y="114" width="9" height="9" fill="url(#cbg)"/><path d="M71 118.5 L73.3 122 L78 114.5" fill="none" stroke="#3a4fa0" stroke-width="1.6"/><path d="M88.5 111.5 L93 111 L101.5 114.5 L100.5 125 L88.5 121.5 Z" fill="#d49a18"/><path d="M87 115 L94.5 115.8 Q96 116 97 118 L100.5 125 L89 123 Z" fill="url(#fold)"/><path d="M100.5 125 L101.5 114.5" stroke="#a87008" stroke-width="1"/><rect x="85.5" y="127.5" width="485" height="17" rx="3" fill="url(#selg)" stroke="#dcdcdc"/><rect x="88.5" y="130.5" width="12" height="12" fill="#fff" stroke="#8f8f8f"/><rect x="90" y="132" width="9" height="9" fill="url(#cbg)"/><path d="M91 136.5 L93.3 140 L98 132.5" fill="none" stroke="#3a4fa0" stroke-width="1.6"/><path d="M107.5 138.5 Q107 134.5 110.5 133.5 Q112 130.2 116 130.5 Q120.5 130.2 121.5 133.5 Q123.5 135 123 138.5 Q122.5 142 118 142 H112 Q107.8 142 107.5 138.5 Z" fill="url(#cloudg)" stroke="#2a5a88" stroke-width="1.1"/><rect x="44.5" y="553.5" width="527" height="26" rx="3" fill="none" stroke="#d6e0e8"/><rect x="490.5" y="560.5" width="12" height="12" fill="#fff" stroke="#8f8f8f"/><rect x="492" y="562" width="9" height="9" fill="url(#cbg)"/></svg>
<div class="t" style="left:110px;top:112px;font-size:11.7px">5-820_20140203_CLOUD - Cloud.bin (Y:/Scan Data/Cloud Compare Tool/cloud comp...</div>
<div class="t" style="left:129px;top:130px;font-size:11.7px;transform:scaleX(0.943);transform-origin:0 0">5-820_20140203_CLOUD - Cloud</div>
<div class="t" style="left:508px;top:560px;font-size:11.5px;transform:scaleX(0.894);transform-origin:0 0">Camera Link</div>

<!-- PROPERTIES DOCK -->
<div class="a" style="left:35px;top:595px;width:546px;height:19px;background:#dadada;border:1px solid #bdbdbd"></div>
<div class="t" style="left:37px;top:598px;transform:scaleX(0.926);transform-origin:0 0">Properties</div>
<svg class="a" style="left:0;top:0" width="600" height="1010"><defs>
<linearGradient id="cmbg" x1="0" y1="0" x2="0" y2="1"><stop offset="0" stop-color="#f2f2f2"/><stop offset="0.45" stop-color="#ebebeb"/><stop offset="0.5" stop-color="#dddddd"/><stop offset="1" stop-color="#cfcfcf"/></linearGradient>
<linearGradient id="spbg" x1="0" y1="0" x2="0" y2="1"><stop offset="0" stop-color="#f4f4f4"/><stop offset="1" stop-color="#e4e4e4"/></linearGradient>
<linearGradient id="hdbg" x1="0" y1="0" x2="0" y2="1"><stop offset="0" stop-color="#f6f6f6"/><stop offset="0.5" stop-color="#eaeaea"/><stop offset="0.55" stop-color="#d9d9d9"/><stop offset="1" stop-color="#cfcfcf"/></linearGradient>
<linearGradient id="hdrg" x1="0" y1="0" x2="0" y2="1"><stop offset="0" stop-color="#ffffff"/><stop offset="0.45" stop-color="#ffffff"/><stop offset="0.5" stop-color="#f4f5f7"/><stop offset="1" stop-color="#f2f3f5"/></linearGradient>
<linearGradient id="sbth" x1="0" y1="0" x2="1" y2="0"><stop offset="0" stop-color="#f4f4f4"/><stop offset="0.5" stop-color="#e6e6e6"/><stop offset="0.55" stop-color="#d6d6d6"/><stop offset="1" stop-color="#c4c4c4"/></linearGradient>
<linearGradient id="sbbg" x1="0" y1="0" x2="1" y2="0"><stop offset="0" stop-color="#e4e4e4"/><stop offset="0.3" stop-color="#f0f0f0"/><stop offset="1" stop-color="#f0f0f0"/></linearGradient>
<linearGradient id="gearbg" x1="0" y1="0" x2="0" y2="1"><stop offset="0" stop-color="#ececec"/><stop offset="1" stop-color="#d8d8d8"/></linearGradient>
<linearGradient id="tabbg" x1="0" y1="0" x2="0" y2="1"><stop offset="0" stop-color="#f6f6f6"/><stop offset="0.5" stop-color="#e8e8e8"/><stop offset="0.55" stop-color="#dadada"/><stop offset="1" stop-color="#d2d2d2"/></linearGradient>
</defs><rect x="44.5" y="625.5" width="527" height="373" fill="#f5f5f5" stroke="#828790"/><rect x="45" y="626" width="509" height="21" fill="url(#hdrg)"/><rect x="45" y="646" width="509" height="1" fill="#d5d5d5"/><rect x="159" y="627" width="1" height="19" fill="#e6e6e6"/><rect x="45" y="648" width="509" height="18" fill="#f5f5f5"/><rect x="45" y="666" width="509" height="21" fill="#ffffff"/><rect x="45" y="687" width="509" height="17" fill="#808080"/><rect x="45" y="704" width="509" height="17" fill="#ffffff"/><rect x="45" y="721" width="509" height="21" fill="#f5f5f5"/><rect x="45" y="742" width="509" height="17" fill="#808080"/><rect x="45" y="759" width="509" height="22" fill="#f5f5f5"/><rect x="45" y="781" width="509" height="21" fill="#ffffff"/><rect x="45" y="802" width="509" height="17" fill="#f5f5f5"/><rect x="45" y="819" width="509" height="17" fill="#808080"/><rect x="160.5" y="666.5" width="393" height="20" rx="2.5" fill="url(#cmbg)" stroke="#707070"/><path d="M541.5 674.5 h7 l-3.5 4 Z" fill="#000"/><rect x="160.5" y="721.5" width="393" height="20" rx="2.5" fill="url(#cmbg)" stroke="#707070"/><path d="M541.5 729.5 h7 l-3.5 4 Z" fill="#000"/><rect x="160.5" y="759.5" width="364" height="20" rx="2.5" fill="url(#cmbg)" stroke="#707070"/><path d="M512.5 767.5 h7 l-3.5 4 Z" fill="#000"/><rect x="532.5" y="760.5" width="20" height="19" rx="3" fill="url(#gearbg)" stroke="#707070"/><g transform="translate(542.5 770)"><circle r="5.5" fill="none" stroke="#b8b8b8" stroke-width="2.2" stroke-dasharray="2.2 2.1"/><circle r="3.6" fill="none" stroke="#b0b0b0" stroke-width="1.6"/></g><rect x="160.5" y="781.5" width="393" height="20" rx="1" fill="#fff" stroke="#d2dae3"/><path d="M160.5 801 V781.5 H553" fill="none" stroke="#abadb3"/><rect x="538.5" y="783.5" width="13" height="8.5" fill="url(#spbg)" stroke="#9a9a9a"/><rect x="538.5" y="792.0" width="13" height="7.5" fill="url(#spbg)" stroke="#9a9a9a"/><path d="M541.5 789.5 h7 l-3.5 -3.5 Z M541.5 794.5 h7 l-3.5 3.5 Z" fill="#4860c0"/><rect x="164" y="784" width="1" height="14" fill="#000"/><rect x="163.5" y="804.5" width="12" height="12" fill="#fff" stroke="#8f8f8f"/><rect x="165" y="806" width="9" height="9" fill="url(#cbg2)"/><path d="M166 810.5 L168.3 814 L173 806.5" fill="none" stroke="#3a4fa0" stroke-width="1.6"/><defs><linearGradient id="cbg2" x1="0" y1="0" x2="1" y2="1"><stop offset="0" stop-color="#c8ccd4"/><stop offset="1" stop-color="#f4f4f6"/></linearGradient></defs><path d="M146.5 868 V847.5 H225.5 V868" fill="url(#tabbg)" stroke="#898c95"/><rect x="45.5" y="867.5" width="506" height="117" fill="#fff" stroke="#898c95"/><path d="M45.5 868 V845.5 H146.5 V868" fill="#fff" stroke="#898c95"/><rect x="46" y="867" width="100" height="2" fill="#fff"/><rect x="53.5" y="875.5" width="214" height="20" rx="1" fill="#fff" stroke="#d2dae3"/><path d="M53.5 895 V875.5 H267" fill="none" stroke="#abadb3"/><rect x="252.5" y="877.5" width="13" height="8.5" fill="url(#spbg)" stroke="#9a9a9a"/><rect x="252.5" y="886.0" width="13" height="7.5" fill="url(#spbg)" stroke="#9a9a9a"/><path d="M255.5 883.5 h7 l-3.5 -3.5 Z M255.5 888.5 h7 l-3.5 3.5 Z" fill="#4860c0"/><rect x="330.5" y="875.5" width="213" height="20" rx="1" fill="#fff" stroke="#d2dae3"/><path d="M330.5 895 V875.5 H543" fill="none" stroke="#abadb3"/><rect x="528.5" y="877.5" width="13" height="8.5" fill="url(#spbg)" stroke="#9a9a9a"/><rect x="528.5" y="886.0" width="13" height="7.5" fill="url(#spbg)" stroke="#9a9a9a"/><path d="M531.5 883.5 h7 l-3.5 -3.5 Z M531.5 888.5 h7 l-3.5 3.5 Z" fill="#4860c0"/><rect x="53.5" y="927.5" width="212" height="20" rx="1" fill="#fff" stroke="#d2dae3"/><path d="M53.5 947 V927.5 H265" fill="none" stroke="#abadb3"/><rect x="250.5" y="929.5" width="13" height="8.5" fill="url(#spbg)" stroke="#9a9a9a"/><rect x="250.5" y="938.0" width="13" height="7.5" fill="url(#spbg)" stroke="#9a9a9a"/><path d="M253.5 935.5 h7 l-3.5 -3.5 Z M253.5 940.5 h7 l-3.5 3.5 Z" fill="#4860c0"/><rect x="331.5" y="927.5" width="212" height="20" rx="1" fill="#fff" stroke="#d2dae3"/><path d="M331.5 947 V927.5 H543" fill="none" stroke="#abadb3"/><rect x="528.5" y="929.5" width="13" height="8.5" fill="url(#spbg)" stroke="#9a9a9a"/><rect x="528.5" y="938.0" width="13" height="7.5" fill="url(#spbg)" stroke="#9a9a9a"/><path d="M531.5 935.5 h7 l-3.5 -3.5 Z M531.5 940.5 h7 l-3.5 3.5 Z" fill="#4860c0"/><rect x="53" y="909" width="490" height="1" fill="#a0a0a0"/><rect x="53" y="910" width="490" height="1" fill="#e0e0e0"/><rect x="282" y="908" width="34" height="4" fill="#d8d8d8"/><rect x="272.5" y="903.5" width="10" height="16" rx="2" fill="url(#hdbg)" stroke="#707070"/><rect x="315.5" y="903.5" width="10" height="16" rx="2" fill="url(#hdbg)" stroke="#707070"/><rect x="53" y="960" width="490" height="5" rx="1" fill="#dcdcdc" stroke="#c4c4c4" stroke-width="0.8"/><rect x="53.5" y="954.5" width="10" height="17" rx="2" fill="url(#hdbg)" stroke="#707070"/><rect x="532.5" y="954.5" width="10" height="17" rx="2" fill="url(#hdbg)" stroke="#707070"/><rect x="555" y="626" width="16" height="372" fill="url(#sbbg)"/><path d="M560 637 h7 l-3.5 -4 Z" fill="#333"/><path d="M560 987 h7 l-3.5 4 Z" fill="#333"/><rect x="555.5" y="828.5" width="14" height="151" rx="2" fill="url(#sbth)" stroke="#9a9a9a"/><path d="M559 900.5 h7 M559 903.5 h7 M559 906.5 h7" stroke="#555" stroke-width="1"/></svg>
<div class="t" style="left:49px;top:631px;font-size:11.5px">Property</div>
<div class="t" style="left:164px;top:631px;font-size:11.5px">State/Value</div>
<div class="t" style="left:49px;top:651px;font-size:11.5px">Global scale</div>
<div class="t" style="left:163px;top:651px;font-size:11.5px;transform:scaleX(0.908);transform-origin:0 0">1.000000</div>
<div class="t" style="left:49px;top:669px;font-size:11.5px">Point size</div>
<div class="t" style="left:164px;top:669px;font-size:11.5px">Default</div>
<div class="t" style="left:49px;top:705px;font-size:11.5px;transform:scaleX(1.07);transform-origin:0 0">Count</div>
<div class="t" style="left:163px;top:705px;font-size:11.5px">1</div>
<div class="t" style="left:49px;top:725px;font-size:11.5px">Active</div>
<div class="t" style="left:164px;top:725px;font-size:11.5px">C2M signed distances</div>
<div class="t" style="left:49px;top:764px;font-size:11.5px">Current</div>
<div class="t" style="left:164px;top:763px;font-size:11.5px;transform:scaleX(0.908);transform-origin:0 0">20140226 TEST</div>
<div class="t" style="left:49px;top:784px;font-size:11.5px;transform:scaleX(0.92);transform-origin:0 0">Steps</div>
<div class="t" style="left:164px;top:784px;font-size:11.5px">10</div>
<div class="t" style="left:49px;top:804px;font-size:11.5px">Visible</div>
<div class="t" style="left:57px;top:851px;font-size:11.5px">Display ranges</div>
<div class="t" style="left:157px;top:851px;font-size:11.5px">Parameters</div>
<div class="t" style="left:58px;top:879px;font-size:11.5px;transform:scaleX(0.938);transform-origin:0 0">-0.37500000</div>
<div class="t" style="left:274px;top:879px;font-size:11.5px">displayed</div>
<div class="t" style="left:335px;top:879px;font-size:11.5px;transform:scaleX(0.938);transform-origin:0 0">0.37500000</div>
<div class="t" style="left:58px;top:931px;font-size:11.5px;transform:scaleX(0.938);transform-origin:0 0">-0.30000001</div>
<div class="t" style="left:272px;top:931px;font-size:11.5px">saturation</div>
<div class="t" style="left:335px;top:931px;font-size:11.5px;transform:scaleX(0.938);transform-origin:0 0">0.30000001</div>
<div class="t" style="left:49px;top:689px;font-size:11.5px;color:#f0f0f0">Scalar Field</div>
<div class="t" style="left:49px;top:744px;font-size:11.5px;color:#f0f0f0">Color Scale</div>
<div class="t" style="left:49px;top:820px;font-size:11.5px;color:#f0f0f0">SF display params</div>


<!-- LEGEND -->
<svg class="a" style="left:0;top:0" width="1920" height="1010"><rect x="1818" y="138" width="53" height="205" fill="#ff80ff"/><rect x="1818" y="343" width="53" height="63" fill="#ff0000"/><rect x="1818" y="406" width="53" height="64" fill="#ffff00"/><rect x="1818" y="470" width="53" height="63" fill="#00c000"/><rect x="1818" y="533" width="53" height="63" fill="#95d655"/><rect x="1818" y="596" width="53" height="64" fill="#00ffff"/><rect x="1818" y="660" width="53" height="63" fill="#000080"/><rect x="1818" y="723" width="53" height="204" fill="#8000ff"/><rect x="1817" y="137" width="55" height="791" fill="none" stroke="#404040" stroke-width="2"/><rect x="1812" y="136" width="5" height="2" fill="#404040"/><rect x="1812" y="176" width="5" height="2" fill="#404040"/><rect x="1812" y="216" width="5" height="2" fill="#404040"/><rect x="1812" y="255" width="5" height="2" fill="#404040"/><rect x="1812" y="295" width="5" height="2" fill="#404040"/><rect x="1812" y="334" width="5" height="2" fill="#404040"/><rect x="1812" y="374" width="5" height="2" fill="#404040"/><rect x="1812" y="413" width="5" height="2" fill="#404040"/><rect x="1812" y="453" width="5" height="2" fill="#404040"/><rect x="1812" y="492" width="5" height="2" fill="#404040"/><rect x="1812" y="532" width="5" height="2" fill="#404040"/><rect x="1812" y="571" width="5" height="2" fill="#404040"/><rect x="1812" y="611" width="5" height="2" fill="#404040"/><rect x="1812" y="650" width="5" height="2" fill="#404040"/><rect x="1812" y="690" width="5" height="2" fill="#404040"/><rect x="1812" y="729" width="5" height="2" fill="#404040"/><rect x="1812" y="769" width="5" height="2" fill="#404040"/><rect x="1812" y="808" width="5" height="2" fill="#404040"/><rect x="1812" y="848" width="5" height="2" fill="#404040"/><rect x="1812" y="887" width="5" height="2" fill="#404040"/><rect x="1812" y="927" width="5" height="2" fill="#404040"/><defs><clipPath id="hclip"><path d="M1878 137 L1879 137 L1879 406 L1880 420 L1882 440 L1885 460 L1889 470 L1893 485 L1898 500 L1903 515 L1904 525 L1903 533 L1903 560 L1903 570 L1902 580 L1898 596 L1895 615 L1891 635 L1887 650 L1884 660 L1883 670 L1882 700 L1881 723 L1880 741 L1879 741 L1879 928 L1878 928 Z"/></clipPath></defs><g clip-path="url(#hclip)"><rect x="1877" y="137" width="30" height="206" fill="#ff80ff"/><rect x="1877" y="343" width="30" height="63" fill="#ff0000"/><rect x="1877" y="406" width="30" height="64" fill="#ffff00"/><rect x="1877" y="470" width="30" height="63" fill="#00c000"/><rect x="1877" y="533" width="30" height="63" fill="#95d655"/><rect x="1877" y="596" width="30" height="64" fill="#00ffff"/><rect x="1877" y="660" width="30" height="63" fill="#000080"/><rect x="1877" y="723" width="30" height="205" fill="#8000ff"/></g><rect x="1530" y="977" width="321" height="1" fill="#404040"/><rect x="1530" y="974" width="1" height="7" fill="#404040"/><rect x="1850" y="974" width="1" height="7" fill="#404040"/><rect x="1860" y="977" width="25" height="2" fill="#00ff00"/><rect x="1884" y="953" width="2" height="26" fill="#00a8ff"/></svg>
<div class="t" style="left:1750px;top:115px;font-size:11.7px;color:#404040;transform:scaleX(1.07);transform-origin:0 0">C2M signed distances</div>
<div class="t" style="left:1700px;width:109px;text-align:right;top:136px;font-size:11.7px;color:#404040;transform:scaleX(1.075);transform-origin:100% 0">0.375</div>
<div class="t" style="left:1700px;width:109px;text-align:right;top:170px;font-size:11.7px;color:#404040;transform:scaleX(1.075);transform-origin:100% 0">0.338</div>
<div class="t" style="left:1700px;width:109px;text-align:right;top:210px;font-size:11.7px;color:#404040;transform:scaleX(1.075);transform-origin:100% 0">0.300</div>
<div class="t" style="left:1700px;width:109px;text-align:right;top:249px;font-size:11.7px;color:#404040;transform:scaleX(1.075);transform-origin:100% 0">0.263</div>
<div class="t" style="left:1700px;width:109px;text-align:right;top:289px;font-size:11.7px;color:#404040;transform:scaleX(1.075);transform-origin:100% 0">0.225</div>
<div class="t" style="left:1700px;width:109px;text-align:right;top:328px;font-size:11.7px;color:#404040;transform:scaleX(1.075);transform-origin:100% 0">0.188</div>
<div class="t" style="left:1700px;width:109px;text-align:right;top:368px;font-size:11.7px;color:#404040;transform:scaleX(1.075);transform-origin:100% 0">0.150</div>
<div class="t" style="left:1700px;width:109px;text-align:right;top:407px;font-size:11.7px;color:#404040;transform:scaleX(1.075);transform-origin:100% 0">0.113</div>
<div class="t" style="left:1700px;width:109px;text-align:right;top:447px;font-size:11.7px;color:#404040;transform:scaleX(1.075);transform-origin:100% 0">0.075</div>
<div class="t" style="left:1700px;width:109px;text-align:right;top:486px;font-size:11.7px;color:#404040;transform:scaleX(1.075);transform-origin:100% 0">0.038</div>
<div class="t" style="left:1700px;width:109px;text-align:right;top:526px;font-size:11.7px;color:#404040;transform:scaleX(1.075);transform-origin:100% 0">0.000</div>
<div class="t" style="left:1700px;width:109px;text-align:right;top:565px;font-size:11.7px;color:#404040;transform:scaleX(1.075);transform-origin:100% 0">-0.038</div>
<div class="t" style="left:1700px;width:109px;text-align:right;top:605px;font-size:11.7px;color:#404040;transform:scaleX(1.075);transform-origin:100% 0">-0.075</div>
<div class="t" style="left:1700px;width:109px;text-align:right;top:644px;font-size:11.7px;color:#404040;transform:scaleX(1.075);transform-origin:100% 0">-0.113</div>
<div class="t" style="left:1700px;width:109px;text-align:right;top:684px;font-size:11.7px;color:#404040;transform:scaleX(1.075);transform-origin:100% 0">-0.150</div>
<div class="t" style="left:1700px;width:109px;text-align:right;top:723px;font-size:11.7px;color:#404040;transform:scaleX(1.075);transform-origin:100% 0">-0.188</div>
<div class="t" style="left:1700px;width:109px;text-align:right;top:763px;font-size:11.7px;color:#404040;transform:scaleX(1.075);transform-origin:100% 0">-0.225</div>
<div class="t" style="left:1700px;width:109px;text-align:right;top:802px;font-size:11.7px;color:#404040;transform:scaleX(1.075);transform-origin:100% 0">-0.263</div>
<div class="t" style="left:1700px;width:109px;text-align:right;top:842px;font-size:11.7px;color:#404040;transform:scaleX(1.075);transform-origin:100% 0">-0.300</div>
<div class="t" style="left:1700px;width:109px;text-align:right;top:881px;font-size:11.7px;color:#404040;transform:scaleX(1.075);transform-origin:100% 0">-0.338</div>
<div class="t" style="left:1700px;width:109px;text-align:right;top:915px;font-size:11.7px;color:#404040;transform:scaleX(1.075);transform-origin:100% 0">-0.375</div>
<div class="t" style="left:1683px;top:986px;font-size:11.7px;color:#404040">75</div>

<!-- DIALOG -->
<svg class="a" style="left:0;top:0" width="1920" height="700"><defs>
<linearGradient id="dlgt" gradientUnits="userSpaceOnUse" x1="0" y1="310" x2="0" y2="342"><stop offset="0" stop-color="#93acca"/><stop offset="0.5" stop-color="#a0b9d6"/><stop offset="1" stop-color="#b9d1ea"/></linearGradient>
<linearGradient id="hbtn" x1="0" y1="0" x2="0" y2="1"><stop offset="0" stop-color="#c8d8ea"/><stop offset="0.45" stop-color="#bccfe4"/><stop offset="0.5" stop-color="#9fb6d0"/><stop offset="1" stop-color="#b8cde4"/></linearGradient>
<linearGradient id="xbtn" x1="0" y1="0" x2="0" y2="1"><stop offset="0" stop-color="#eab0a0"/><stop offset="0.45" stop-color="#d88870"/><stop offset="0.5" stop-color="#b8442a"/><stop offset="1" stop-color="#d87860"/></linearGradient>
<linearGradient id="btng" x1="0" y1="0" x2="0" y2="1"><stop offset="0" stop-color="#f2f2f2"/><stop offset="0.45" stop-color="#ebebeb"/><stop offset="0.5" stop-color="#dddddd"/><stop offset="1" stop-color="#cfcfcf"/></linearGradient>
<linearGradient id="btnc" x1="0" y1="0" x2="0" y2="1"><stop offset="0" stop-color="#f4f4f4"/><stop offset="0.45" stop-color="#eeeeee"/><stop offset="0.5" stop-color="#dcdcdc"/><stop offset="1" stop-color="#d4d0cf"/></linearGradient>
</defs><path d="M914.5 670.5 V317 Q914.5 310.5 921 310.5 H1720 Q1726.5 310.5 1726.5 317 V670.5 Z" fill="url(#dlgt)" stroke="#1a1a1a"/><path d="M915.5 670 V317.5 Q915.5 311.5 921.5 311.5 H1719.5 Q1725.5 311.5 1725.5 317.5 V670" fill="none" stroke="#e8f0f8" stroke-width="1" opacity="0.7"/><rect x="915" y="340" width="811" height="330" fill="#b9d1ea"/><rect x="1725" y="318" width="1" height="352" fill="#30d0f0" opacity="0.6"/><rect x="915" y="669" width="811" height="1" fill="#30d0f0" opacity="0.5"/><rect x="922" y="340" width="797" height="323" fill="#f0f0f0"/><rect x="924" y="320" width="16" height="16" fill="#dde4ea"/><g class="cc" fill="none" stroke="#0a66a0" stroke-width="1.70"><path d="M934.54 324.22 A5.50 5.20 0 1 0 934.54 332.18"/><path d="M938.33 324.99 A5.00 5.00 0 1 0 938.33 331.41"/></g><rect x="1653.5" y="320.5" width="30" height="16" rx="2.5" fill="url(#hbtn)" stroke="#51627a"/><rect x="1654.5" y="321.5" width="28" height="14" rx="2" fill="none" stroke="#e4eef8" stroke-width="0.8"/><path d="M1665.5 325.5 Q1666 322.5 1668.7 322.5 Q1672 322.5 1672 325.2 Q1672 327 1669.5 328 V329.5" fill="none" stroke="#3a4658" stroke-width="3.6" stroke-linecap="round"/><rect x="1667.5" y="331" width="3" height="3" fill="#3a4658"/><path d="M1665.5 325.5 Q1666 322.5 1668.7 322.5 Q1672 322.5 1672 325.2 Q1672 327 1669.5 328 V329.5" fill="none" stroke="#fff" stroke-width="1.6" stroke-linecap="round"/><rect x="1668.3" y="331.6" width="1.6" height="1.6" fill="#fff"/><rect x="1686.5" y="320.5" width="30" height="16" rx="2.5" fill="url(#xbtn)" stroke="#4a1010"/><rect x="1687.5" y="321.5" width="28" height="14" rx="2" fill="none" stroke="#f8d8d0" stroke-width="0.8"/><path d="M1697 324.5 l9 8 M1706 324.5 l-9 8" stroke="#3a4050" stroke-width="4"/><path d="M1697 324.5 l9 8 M1706 324.5 l-9 8" stroke="#fff" stroke-width="2.4"/><rect x="1269.5" y="351.5" width="146" height="19" rx="2.5" fill="url(#btng)" stroke="#707070"/><path d="M1401.5 358.5 h7 l-3.5 4 Z" fill="#000"/><rect x="1186.5" y="378.5" width="66" height="19" rx="2.5" fill="url(#btng)" stroke="#707070"/><path d="M1239 385.5 h7 l-3.5 4 Z" fill="#000"/><rect x="1260.5" y="379.5" width="49" height="16" rx="2.5" fill="url(#btng)" stroke="#707070"/><rect x="1318.5" y="379.5" width="34" height="16" rx="2.5" fill="#f4f4f4" stroke="#adb2b5"/><rect x="1361.5" y="379.5" width="41" height="16" rx="2.5" fill="url(#btng)" stroke="#707070"/><rect x="1412.5" y="379.5" width="35" height="16" rx="2.5" fill="url(#btng)" stroke="#707070"/><rect x="1456.5" y="379.5" width="31" height="16" rx="2.5" fill="url(#btng)" stroke="#707070"/><defs><linearGradient id="cbar" x1="0" x2="1" y1="0" y2="0"><stop offset="0.00065" stop-color="#8000ff"/><stop offset="0.01636" stop-color="#8000ff"/><stop offset="0.14987" stop-color="#8000ff"/><stop offset="0.16688" stop-color="#000080"/><stop offset="0.23364" stop-color="#000080"/><stop offset="0.24935" stop-color="#0080c0"/><stop offset="0.31610" stop-color="#0080c0"/><stop offset="0.33312" stop-color="#00ffff"/><stop offset="0.36584" stop-color="#00ffff"/><stop offset="0.38285" stop-color="#95d655"/><stop offset="0.49149" stop-color="#95d655"/><stop offset="0.49935" stop-color="#00c800"/><stop offset="0.61584" stop-color="#00a000"/><stop offset="0.63285" stop-color="#ffff00"/><stop offset="0.66558" stop-color="#ffff00"/><stop offset="0.68259" stop-color="#ff8000"/><stop offset="0.74935" stop-color="#ff8000"/><stop offset="0.76505" stop-color="#ff0000"/><stop offset="0.83181" stop-color="#ff0000"/><stop offset="0.84882" stop-color="#ff80ff"/><stop offset="0.99935" stop-color="#ff80ff"/></linearGradient></defs><rect x="938" y="405" width="767" height="138" fill="#fff"/><rect x="939" y="406" width="765" height="136" fill="#000"/><rect x="940" y="407" width="763" height="134" fill="url(#cbar)"/><rect x="951" y="406" width="1" height="136" fill="#000"/><rect x="1053" y="406" width="1" height="136" fill="#000"/><rect x="1066" y="406" width="1" height="136" fill="#000"/><rect x="1117" y="406" width="1" height="136" fill="#000"/><rect x="1129" y="406" width="1" height="136" fill="#000"/><rect x="1180" y="406" width="1" height="136" fill="#000"/><rect x="1193" y="406" width="1" height="136" fill="#000"/><rect x="1218" y="406" width="1" height="136" fill="#000"/><rect x="1231" y="406" width="1" height="136" fill="#000"/><rect x="1314" y="406" width="1" height="136" fill="#000"/><rect x="1320" y="406" width="1" height="136" fill="#000"/><rect x="1409" y="406" width="1" height="136" fill="#000"/><rect x="1422" y="406" width="1" height="136" fill="#000"/><rect x="1447" y="406" width="1" height="136" fill="#000"/><rect x="1460" y="406" width="1" height="136" fill="#000"/><rect x="1511" y="406" width="1" height="136" fill="#000"/><rect x="1523" y="406" width="1" height="136" fill="#000"/><rect x="1574" y="406" width="1" height="136" fill="#000"/><rect x="1587" y="406" width="1" height="136" fill="#000"/><path d="M939.5 543 L942.5 549 H936.5 Z" fill="#8000ff" stroke="#000" stroke-width="1"/><rect x="935.5" y="549.5" width="7" height="7" fill="#8000ff" stroke="#000" stroke-width="1"/><path d="M951.5 543 L954.5 549 H948.5 Z" fill="#8000ff" stroke="#000" stroke-width="1"/><rect x="947.5" y="549.5" width="7" height="7" fill="#8000ff" stroke="#000" stroke-width="1"/><path d="M1053.5 543 L1056.5 549 H1050.5 Z" fill="#8000ff" stroke="#000" stroke-width="1"/><rect x="1049.5" y="549.5" width="7" height="7" fill="#8000ff" stroke="#000" stroke-width="1"/><path d="M1066.5 543 L1069.5 549 H1063.5 Z" fill="#000080" stroke="#000" stroke-width="1"/><rect x="1062.5" y="549.5" width="7" height="7" fill="#000080" stroke="#000" stroke-width="1"/><path d="M1117.5 543 L1120.5 549 H1114.5 Z" fill="#000080" stroke="#000" stroke-width="1"/><rect x="1113.5" y="549.5" width="7" height="7" fill="#000080" stroke="#000" stroke-width="1"/><path d="M1129.5 543 L1132.5 549 H1126.5 Z" fill="#0080c0" stroke="#000" stroke-width="1"/><rect x="1125.5" y="549.5" width="7" height="7" fill="#0080c0" stroke="#000" stroke-width="1"/><path d="M1180.5 543 L1183.5 549 H1177.5 Z" fill="#0080c0" stroke="#000" stroke-width="1"/><rect x="1176.5" y="549.5" width="7" height="7" fill="#0080c0" stroke="#000" stroke-width="1"/><path d="M1193.5 543 L1196.5 549 H1190.5 Z" fill="#00ffff" stroke="#000" stroke-width="1"/><rect x="1189.5" y="549.5" width="7" height="7" fill="#00ffff" stroke="#000" stroke-width="1"/><path d="M1218.5 543 L1221.5 549 H1215.5 Z" fill="#00ffff" stroke="#000" stroke-width="1"/><rect x="1214.5" y="549.5" width="7" height="7" fill="#00ffff" stroke="#000" stroke-width="1"/><path d="M1231.5 543 L1234.5 549 H1228.5 Z" fill="#95d655" stroke="#000" stroke-width="1"/><rect x="1227.5" y="549.5" width="7" height="7" fill="#95d655" stroke="#000" stroke-width="1"/><path d="M1314.5 543 L1317.5 549 H1311.5 Z" fill="#95d655" stroke="#000" stroke-width="1"/><rect x="1310.5" y="549.5" width="7" height="7" fill="#95d655" stroke="#000" stroke-width="1"/><path d="M1320.5 543 L1323.5 549 H1317.5 Z" fill="#00c800" stroke="#000" stroke-width="1"/><rect x="1316.5" y="549.5" width="7" height="7" fill="#00c800" stroke="#000" stroke-width="1"/><path d="M1409.5 543 L1412.5 549 H1406.5 Z" fill="#00a000" stroke="#000" stroke-width="1"/><rect x="1405.5" y="549.5" width="7" height="7" fill="#00a000" stroke="#000" stroke-width="1"/><path d="M1422.5 543 L1425.5 549 H1419.5 Z" fill="#ffff00" stroke="#000" stroke-width="1"/><rect x="1418.5" y="549.5" width="7" height="7" fill="#ffff00" stroke="#000" stroke-width="1"/><path d="M1447.5 543 L1450.5 549 H1444.5 Z" fill="#ffff00" stroke="#000" stroke-width="1"/><rect x="1443.5" y="549.5" width="7" height="7" fill="#ffff00" stroke="#000" stroke-width="1"/><path d="M1460.5 543 L1463.5 549 H1457.5 Z" fill="#ff8000" stroke="#000" stroke-width="1"/><rect x="1456.5" y="549.5" width="7" height="7" fill="#ff8000" stroke="#000" stroke-width="1"/><path d="M1511.5 543 L1514.5 549 H1508.5 Z" fill="#ff8000" stroke="#000" stroke-width="1"/><rect x="1507.5" y="549.5" width="7" height="7" fill="#ff8000" stroke="#000" stroke-width="1"/><path d="M1523.5 543 L1526.5 549 H1520.5 Z" fill="#ff0000" stroke="#000" stroke-width="1"/><rect x="1519.5" y="549.5" width="7" height="7" fill="#ff0000" stroke="#000" stroke-width="1"/><path d="M1574 542 H1575 L1578 548 V557 H1570 V548 Z" fill="#ff0000"/><path d="M1587.5 543 L1590.5 549 H1584.5 Z" fill="#ff80ff" stroke="#000" stroke-width="1"/><rect x="1583.5" y="549.5" width="7" height="7" fill="#ff80ff" stroke="#000" stroke-width="1"/><path d="M1702.5 543 L1705.5 549 H1699.5 Z" fill="#ff80ff" stroke="#000" stroke-width="1"/><rect x="1698.5" y="549.5" width="7" height="7" fill="#ff80ff" stroke="#000" stroke-width="1"/><rect x="933.5" y="571.5" width="773" height="50" rx="3" fill="none" stroke="#d5dfe5"/><rect x="939" y="566" width="78" height="10" fill="#f0f0f0"/><rect x="944.5" y="590.5" width="20" height="19" rx="3" fill="#f0f0f0" stroke="#707070"/><path d="M947 595 h5 l1 1 v11 h-6 Z" fill="#f8e0a0" stroke="#c0a050" stroke-width="0.6"/><path d="M950 596 h9 v2 h-9 Z M950.5 598 h8 l-1 9 h-6 Z" fill="#708070" stroke="#334033" stroke-width="0.6"/><circle cx="960" cy="605" r="1.6" fill="#000"/><rect x="1043" y="588" width="26" height="25" fill="#a00000"/><rect x="1043" y="588" width="25" height="24" fill="#ff0000"/><rect x="1106.5" y="590.5" width="261" height="19" fill="#fff" stroke="#d2dae3"/><path d="M1106.5 609 V590.5 H1367" fill="none" stroke="#abadb3"/><rect x="1352.5" y="592.5" width="13" height="7.5" fill="#f0f0f0" stroke="#9a9a9a"/><rect x="1352.5" y="600" width="13" height="7.5" fill="#f0f0f0" stroke="#9a9a9a"/><path d="M1355.5 598 h7 l-3.5 -3 Z M1355.5 602 h7 l-3.5 3 Z" fill="#4860c0"/><rect x="1634.5" y="630.5" width="72" height="20" rx="3" fill="url(#btnc)" stroke="#3c7fb1"/><rect x="1635.5" y="631.5" width="70" height="18" rx="2.5" fill="none" stroke="#48d0f0" stroke-width="1"/></svg>
<div class="t" style="left:944px;top:322px;font-size:11.7px">Color Sccale Editor</div>
<div class="t" style="left:1226px;top:354px;font-size:11px">Current</div>
<div class="t" style="left:1273px;top:354px;font-size:11.5px;transform:scaleX(0.908);transform-origin:0 0">20140226 TEST</div>
<div class="t" style="left:1154px;top:381px;font-size:11.5px;transform:scaleX(0.88);transform-origin:0 0">Mode</div>
<div class="t" style="left:1190px;top:381px;font-size:11.5px;transform:scaleX(0.924);transform-origin:0 0">absolute</div>
<div class="t" style="left:1264px;top:381px;font-size:11.5px;transform:scaleX(0.885);transform-origin:0 0">Rename</div>
<div class="t" style="left:1322px;top:381px;font-size:11.5px;color:#a0a0a0;transform:scaleX(0.905);transform-origin:0 0">Save</div>
<div class="t" style="left:1365px;top:381px;font-size:11.5px;transform:scaleX(0.916);transform-origin:0 0">Delete</div>
<div class="t" style="left:1416px;top:381px;font-size:11.5px;transform:scaleX(0.91);transform-origin:0 0">Copy</div>
<div class="t" style="left:1460px;top:381px;font-size:11.5px;transform:scaleX(0.887);transform-origin:0 0">New</div>
<div class="t" style="left:941px;top:565px;font-size:11.5px;transform:scaleX(0.91);transform-origin:0 0">Selected slider</div>
<div class="t" style="left:1012px;top:594px;font-size:11.5px;transform:scaleX(0.87);transform-origin:0 0">Color</div>
<div class="t" style="left:1075px;top:594px;font-size:11.5px;transform:scaleX(0.85);transform-origin:0 0">Value</div>
<div class="t" style="left:1110px;top:594px;font-size:11.5px;transform:scaleX(0.91);transform-origin:0 0">0.200000</div>
<div class="t" style="left:1374px;top:594px;font-size:11.5px">(83.3333 %)</div>
<div class="t" style="left:1656px;top:634px;font-size:11.5px;transform:scaleX(0.86);transform-origin:0 0">Close</div>

<!-- CONSOLE DOCK -->
<div class="a" style="left:35px;top:1013px;width:1885px;height:19px;background:#dadada;border:1px solid #bdbdbd;border-right:none"></div>
<div class="t" style="left:37px;top:1016px">Console</div>
<svg class="a" style="left:0;top:590" width="1920" height="560"><path d="M571.5 13 V10.5 H576.5 V15.5 H574" fill="none" stroke="#000" stroke-width="1"/><rect x="571" y="10" width="6" height="2" fill="#000"/><rect x="568.5" y="13.5" width="5" height="5" fill="#fff" stroke="#000" stroke-width="1"/><rect x="568" y="13" width="6" height="2" fill="#000"/><rect x="44.5" y="453.5" width="1866" height="87" fill="#fff" stroke="#828790"/><rect x="45" y="454" width="1848" height="17" fill="#f5f5f5"/><rect x="45" y="488" width="1848" height="17" fill="#f5f5f5"/><path d="M1894.5 431 V428.5 H1899.5 V433.5 H1897" fill="none" stroke="#000" stroke-width="1"/><rect x="1894" y="428" width="6" height="2" fill="#000"/><rect x="1891.5" y="431.5" width="5" height="5" fill="#fff" stroke="#000" stroke-width="1"/><rect x="1891" y="431" width="6" height="2" fill="#000"/><path d="M1907 428.5 l7 7 M1914 428.5 l-7 7" stroke="#000" stroke-width="1.8"/><rect x="1893" y="454" width="17" height="86" fill="url(#sbbg2)"/><defs><linearGradient id="sbbg2" x1="0" y1="0" x2="1" y2="0"><stop offset="0" stop-color="#e8e8e8"/><stop offset="0.3" stop-color="#f0f0f0"/><stop offset="1" stop-color="#f0f0f0"/></linearGradient><linearGradient id="sbth2" x1="0" y1="0" x2="1" y2="0"><stop offset="0" stop-color="#f4f4f4"/><stop offset="0.5" stop-color="#e6e6e6"/><stop offset="0.55" stop-color="#d6d6d6"/><stop offset="1" stop-color="#c4c4c4"/></linearGradient></defs><path d="M1898 466 h7 l-3.5 -4 Z" fill="#333"/><path d="M1898 528 h7 l-3.5 4 Z" fill="#333"/><rect x="1894.5" y="505.5" width="14" height="16" rx="2" fill="url(#sbth2)" stroke="#9a9a9a"/></svg>
<div class="t" style="left:49px;top:1047px;font-size:11.5px">[11:40:58] [I/O] File '5-820_20140203_CLOUD - Cloud' loaded successfully</div>
<div class="t" style="left:49px;top:1064px;font-size:11.5px">[12:17:28] [I/O] File 'Y:/Scan Data/Cloud Compare Tool/SCAN COMPARE TEMPLATE 20140224.bin' saved successfully</div>
<div class="t" style="left:49px;top:1081px;font-size:11.5px">[08:10:57] [I/O] File 'Y:/Scan Data/Cloud Compare Tool/SCAN COMPARE TEMPLATE 20140225.bin' saved successfully</div>
<div class="t" style="left:49px;top:1098px;font-size:11.5px">[16:21:39] [I/O] File 'Y:/Scan Data/Cloud Compare Tool/SCAN COMPARE TEMPLATE 20140226.bin' saved successfully</div>


<!-- TASKBAR -->
<div class="a" style="left:0;top:1160px;width:1920px;height:40px;background:linear-gradient(90deg,#8394ab 0px,#8596ad 68px,#a9c0da 88px,#a9c0da 1676px,#8596ad 1710px,#8394ab 1920px)"></div>
<div class="a" style="left:0;top:1160px;width:1920px;height:1px;background:#3a4656"></div>

<!-- TASKBAR ICONS -->
<svg class="a" style="left:0;top:0" width="1920" height="1200"><defs>
<radialGradient id="orb" cx=".5" cy=".35" r=".65"><stop offset="0" stop-color="#9ec8e8"/><stop offset=".5" stop-color="#2a78b8"/><stop offset=".85" stop-color="#0a4c88"/><stop offset="1" stop-color="#20b0e0"/></radialGradient>
<linearGradient id="tbtn" x1="0" y1="0" x2="1" y2="1"><stop offset="0" stop-color="#e6eef8"/><stop offset=".5" stop-color="#c4d4e8"/><stop offset="1" stop-color="#b0c6de"/></linearGradient>
<linearGradient id="tbtn2" x1="0" y1="0" x2="1" y2="1"><stop offset="0" stop-color="#f4f8fc"/><stop offset=".5" stop-color="#dce6f2"/><stop offset="1" stop-color="#c8d8ea"/></linearGradient>
</defs><circle cx="27" cy="1180.5" r="18" fill="url(#orb)" stroke="#1a5080" stroke-width="1"/><ellipse cx="27" cy="1172" rx="14" ry="8" fill="#fff" opacity="0.25"/><g transform="translate(27 1180)"><path d="M-10 -3 Q-7 -9 -1 -8 L-2 -1 Q-7 -2 -10 -3 Z" fill="#f05020"/><path d="M1 -8 Q6 -6 10 -7 L9 0 Q5 1 0 -1 Z" fill="#90c030"/><path d="M-11 -1 Q-7 0 -2 1 L-3 8 Q-8 6 -12 6 Z" fill="#30a0e8"/><path d="M0 1 Q5 3 9 2 L8 9 Q4 10 -1 8 Z" fill="#f8c020"/></g><defs><radialGradient id="ieg" cx=".5" cy=".7" r=".6"><stop offset="0" stop-color="#70d8ff"/><stop offset=".6" stop-color="#1a80d8"/><stop offset="1" stop-color="#0a3a90"/></radialGradient></defs><ellipse cx="92" cy="1179" rx="17" ry="5.5" transform="rotate(-38 92 1179)" fill="none" stroke="#f0d070" stroke-width="3" opacity="0.5"/><circle cx="91" cy="1180" r="12" fill="url(#ieg)" stroke="#0a3070" stroke-width="1"/><path d="M84.5 1179 A6.5 6 0 0 1 97.5 1179 Z" fill="#fff"/><path d="M84.5 1183 H103 V1186.5 H93 Q86 1187 84.5 1183 Z" fill="#fff"/><ellipse cx="92" cy="1179" rx="17" ry="5.5" transform="rotate(-38 92 1179)" fill="none" stroke="#f0a818" stroke-width="1.8" stroke-dasharray="60 12" /><rect x="121.5" y="1161.5" width="59" height="39" rx="3" fill="url(#tbtn)" stroke="#5a6a80" stroke-width="1"/><rect x="122.5" y="1162.5" width="57" height="37" rx="2" fill="none" stroke="#fff" stroke-width="0.8" opacity="0.6"/><rect x="307.5" y="1161.5" width="59" height="39" rx="3" fill="url(#tbtn)" stroke="#5a6a80" stroke-width="1"/><rect x="308.5" y="1162.5" width="57" height="37" rx="2" fill="none" stroke="#fff" stroke-width="0.8" opacity="0.6"/><rect x="369.5" y="1161.5" width="59" height="39" rx="3" fill="url(#tbtn2)" stroke="#5a6a80" stroke-width="1"/><rect x="370.5" y="1162.5" width="57" height="37" rx="2" fill="none" stroke="#fff" stroke-width="0.8" opacity="0.6"/><path d="M136 1171 h9 l2 2 h16 v18 h-27 Z" fill="#f0dc90" stroke="#c8a850" stroke-width="0.8"/><rect x="139" y="1168" width="20" height="6" fill="#fff" stroke="#ccc" stroke-width="0.5"/><rect x="140" y="1168" width="3" height="2" fill="#20c020"/><rect x="148" y="1170" width="3" height="2" fill="#e02020"/><rect x="154" y="1172" width="3" height="2" fill="#2080e0"/><path d="M135 1176 h29 l-1 15 h-27 Z" fill="#f8e8a8" stroke="#c8a850" stroke-width="0.6"/><path d="M140 1197 v-9 q0 -3 3 -3 h13 q3 0 3 3 v9 h-4 v-6 h-11 v6 Z" fill="#78c0f0" stroke="#3a80c0" stroke-width="0.8"/><rect x="199" y="1169" width="22" height="24" fill="#a8d0f0" stroke="#6898c8" stroke-width="0.8"/><rect x="203" y="1170" width="22" height="24" fill="#c0e0f8" stroke="#80a8d0" stroke-width="0.6" opacity="0.6"/><circle cx="209.5" cy="1180.5" r="8" fill="#f07010" stroke="#c05000" stroke-width="0.8"/><path d="M207 1176 L214 1180.5 L207 1185 Z" fill="#fff"/><rect x="263.5" y="1165.5" width="22" height="29" rx="2" fill="#d8e8f8" stroke="#5080b0"/><rect x="266" y="1168" width="17" height="7" fill="#f0f8ff" stroke="#7090b0" stroke-width="0.6"/><rect x="266" y="1167.5" width="17" height="2" fill="#f0a030"/><rect x="266.0" y="1178" width="3" height="2.6" fill="#4070b0"/><rect x="270.3" y="1178" width="3" height="2.6" fill="#4070b0"/><rect x="274.6" y="1178" width="3" height="2.6" fill="#4070b0"/><rect x="278.9" y="1178" width="3" height="2.6" fill="#4070b0"/><rect x="266.0" y="1182" width="3" height="2.6" fill="#4070b0"/><rect x="270.3" y="1182" width="3" height="2.6" fill="#4070b0"/><rect x="274.6" y="1182" width="3" height="2.6" fill="#4070b0"/><rect x="278.9" y="1182" width="3" height="2.6" fill="#4070b0"/><rect x="266.0" y="1186" width="3" height="2.6" fill="#4070b0"/><rect x="270.3" y="1186" width="3" height="2.6" fill="#4070b0"/><rect x="274.6" y="1186" width="3" height="2.6" fill="#4070b0"/><rect x="278.9" y="1186" width="3" height="2.6" fill="#4070b0"/><rect x="266.0" y="1190" width="3" height="2.6" fill="#4070b0"/><rect x="270.3" y="1190" width="3" height="2.6" fill="#4070b0"/><rect x="274.6" y="1190" width="3" height="2.6" fill="#4070b0"/><rect x="278.9" y="1190" width="3" height="2.6" fill="#4070b0"/><rect x="279" y="1186" width="3" height="6" fill="#f08020"/><rect x="323" y="1166" width="26" height="28" rx="3" fill="#e0f0f8" stroke="#70b0d8" stroke-width="1"/><path d="M327 1169 v21 h11 v-4 h-7 v-17 Z" fill="#1a3a8a"/><circle cx="342" cy="1183" r="7" fill="none" stroke="#60b8e0" stroke-width="2.5"/><rect x="342" y="1186" width="10" height="10" fill="#30c030" stroke="#1a7a1a" stroke-width="1"/><rect x="385" y="1165" width="30" height="30" fill="#e0e8f0" opacity="0.6"/><g class="cc" fill="none" stroke="#1a5a90" stroke-width="3.04"><path d="M403.75 1172.43 A10.45 9.88 0 1 0 403.75 1187.57"/><path d="M410.96 1173.89 A9.50 9.50 0 1 0 410.96 1186.11"/></g><rect x="1906.5" y="1161.5" width="13" height="38" fill="#5c6c80" stroke="#a0b0c4" stroke-width="1"/><path d="M1718 1183 L1722.5 1178.5 L1727 1183 Z" fill="#f0f4f8"/><path d="M1740 1174 v21" stroke="#f0f0f0" stroke-width="1.5"/><path d="M1741 1174 h11 l-2 4 l2 4 h-11 Z" fill="#f0f0f0" stroke="#888" stroke-width="0.5"/><circle cx="1750" cy="1187" r="5" fill="#e02020" stroke="#fff" stroke-width="1"/><path d="M1748 1185 l4 4 m0 -4 l-4 4" stroke="#fff" stroke-width="1.4"/><rect x="1764" y="1175" width="9" height="14" fill="#f0f0f0" stroke="#444" stroke-width="1"/><rect x="1767" y="1173" width="10" height="14" fill="#f4f4f4" stroke="#444" stroke-width="1"/><path d="M1771 1177 h6 v5 h-6 Z M1773 1182 v6" fill="#fff" stroke="#333" stroke-width="1.2"/><rect x="1788.0" y="1188.0" width="2.2" height="3.0" fill="#f0f0f0" stroke="#444" stroke-width="0.4"/><rect x="1791.3" y="1185.5" width="2.2" height="5.5" fill="#f0f0f0" stroke="#444" stroke-width="0.4"/><rect x="1794.6" y="1183.0" width="2.2" height="8.0" fill="#6a7a8a" stroke="#444" stroke-width="0.4"/><rect x="1797.9" y="1180.5" width="2.2" height="10.5" fill="#6a7a8a" stroke="#444" stroke-width="0.4"/><rect x="1801.2" y="1178.0" width="2.2" height="13.0" fill="#6a7a8a" stroke="#444" stroke-width="0.4"/><path d="M1812 1177 h3 l5 -4 v16 l-5 -4 h-3 Z" fill="#f0f0f0" stroke="#555" stroke-width="0.8"/><path d="M1822 1177 q2 4 0 7 M1824.5 1175 q3 6 0 11" fill="none" stroke="#e8e8e8" stroke-width="1.2"/></svg>
<div class="t" style="left:1849px;top:1165px;font-size:11.5px;color:#fff">4:43 PM</div>
<div class="t" style="left:1844px;top:1182px;font-size:11.5px;color:#fff">2/26/2014</div>
</body></html>
